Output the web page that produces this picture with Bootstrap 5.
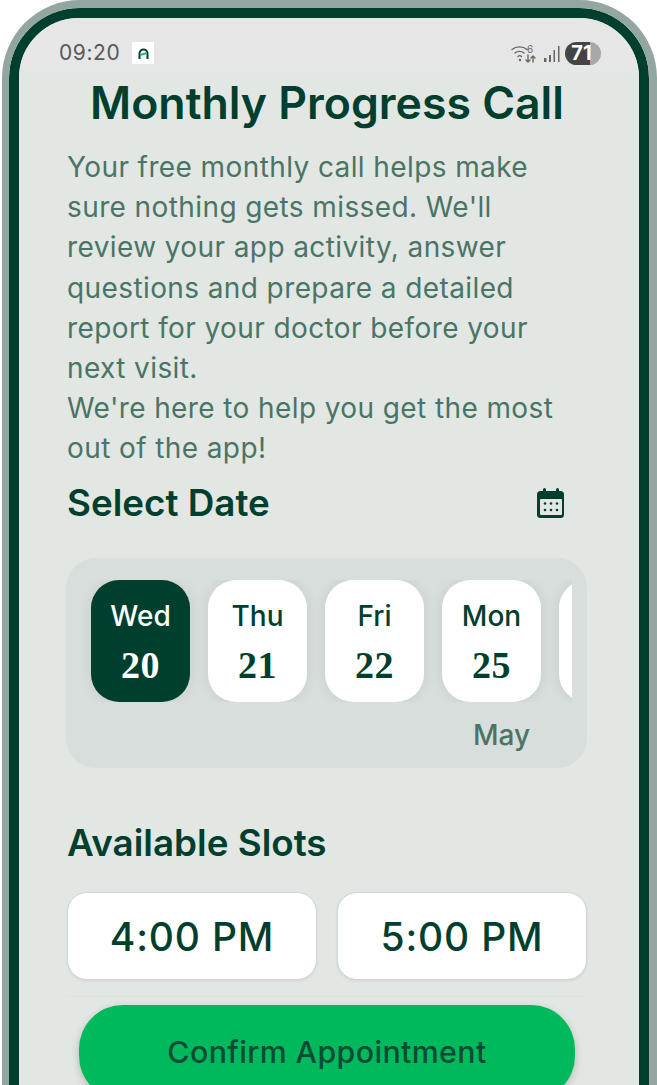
<!DOCTYPE html>
<html lang="en">
<head>
<meta charset="utf-8">
<title>Monthly Progress Call</title>
<link href="https://cdn.jsdelivr.net/npm/bootstrap@5.3.0/dist/css/bootstrap.min.css" rel="stylesheet">
<style>
html,body{height:1085px;overflow:hidden;background:#fff;margin:0}
body{font-family:"Inter","Liberation Sans",sans-serif;color:#003f2e}
.shell{width:655px;height:1200px;margin:0 0 0 2px;border:7px solid #94a6a1;border-top-width:8px;border-right-width:8px;border-radius:78px;overflow:hidden}
.shell-in{height:100%;border:10px solid #003f2e;border-radius:70px;overflow:hidden;background:#e2e7e4}
.status{height:58px;padding:24px 38px 0 40px;background:linear-gradient(#e6e6e6 80%,#e2e7e4);color:#555}
.clock{font-size:21px;line-height:22px;letter-spacing:.6px;color:#595959}
.appmark{width:22px;height:22px;background:#fff}
.batt{width:36px;height:23px;border-radius:12px;background:linear-gradient(90deg,#444 0 69%,#a8a8a8 69%);color:#fff;font-size:20px;font-weight:700;line-height:23px;text-align:center;padding-right:3px}
.signal{margin-left:2px}
.main{padding:0 52px 0 48px}
.title{font-size:44.6px;font-weight:600;line-height:54px;margin:0 0 17px;text-align:center;color:#003f2e;white-space:nowrap}
.intro{font-size:28px;line-height:40.2px;color:#4a7465;letter-spacing:.4px;margin:0;white-space:nowrap}
.sect{font-size:36.8px;font-weight:600;line-height:44px;margin:0;color:#003f2e}
.datehead{margin-top:12px;margin-bottom:33px}
.panel{height:210px;border-radius:30px;background:#d8dedb;padding:22px 15px 0 15px;margin-left:-1px}
.scroller{height:122px;padding-left:10px;column-gap:18px}
.daycard{flex:0 0 99px;height:122px;border-radius:28px;background:#fff;color:#003f2e;box-shadow:0 0 14px rgba(0,0,0,.08);padding-top:19px}
.daycard.on{background:#003f2e;color:#fff}
.dayname{font-size:28px;font-weight:500;line-height:34px}
.daynum{font-family:"Liberation Serif",serif;font-size:38px;font-weight:700;line-height:36px;margin-top:14px;letter-spacing:.5px}
.month{font-size:28px;font-weight:500;line-height:34px;color:#4a7465;padding:16px 42px 0 0;text-align:right}
.slotshead{margin-top:53px;margin-bottom:27px}
.slotbtn{flex:1 1 0;height:88px;border-radius:20px;background:#fff;border:1px solid #cfd6d3;box-shadow:0 1px 3px rgba(0,0,0,.08);font-size:39px;font-weight:500;letter-spacing:.8px;color:#003f2e;padding:3px 0 0}
.slotbtn:hover{background:#fff;color:#003f2e}
.sep{height:1px;background:#dde2df;margin:16px 0 8px}
.confirm{display:block;width:496px;height:95px;margin:0 0 0 12px;border:0;border-radius:44px;background:#00b95c;box-shadow:0 3px 8px rgba(0,0,0,.2);color:#0b4a35;font-size:30.3px;font-weight:500;letter-spacing:.4px;padding:2px 0 0}
</style>
</head>
<body>
<div class="shell"><div class="shell-in">
  <div class="status d-flex align-items-start justify-content-between">
    <div class="d-flex align-items-center gap-2">
      <span class="clock">09:20</span>
      <span class="appmark d-flex align-items-center justify-content-center ms-1">
        <svg width="13" height="13" viewBox="0 0 13 13" fill="none"><path d="M2.5 12V6.5a4 4 0 0 1 8 0V12" stroke="#0c3d30" stroke-width="2"/><path d="M3 8l7-2" stroke="#22b573" stroke-width="2"/></svg>
      </span>
    </div>
    <div class="d-flex align-items-center gap-1">
      <svg width="26" height="22" viewBox="0 0 26 22" fill="none" stroke="#666" stroke-width="1.4" stroke-linecap="round">
        <path d="M1 6.5c4-3.5 11-3.5 15 0M4 10c2.5-2.2 6.5-2.2 9 0M7 13.5c1-1 2.5-1 3.5 0"/>
        <circle cx="9" cy="17" r="1.2" fill="#666" stroke="none"/>
        <path d="M17 12v7m-2-2l2 2 2-2M22 19v-6m-2 2l2-2 2 2"/>
        <text x="16" y="10" font-size="10" fill="#666" stroke="none" font-family="Inter,sans-serif">6</text>
      </svg>
      <svg width="18" height="20" viewBox="0 0 18 20" fill="#666" class="signal"><rect x="1" y="14" width="2.5" height="4"/><rect x="6" y="11" width="2" height="7"/><rect x="10.5" y="6" width="1.5" height="12"/><rect x="15" y="2" width="1.5" height="16"/></svg>
      <span class="batt">71</span>
    </div>
  </div>
  <main class="main">
    <h1 class="title">Monthly Progress Call</h1>
    <p class="intro">Your free monthly call helps make<br>sure nothing gets missed. We'll<br>review your app activity, answer<br>questions and prepare a detailed<br>report for your doctor before your<br>next visit.<br>We're here to help you get the most<br>out of the app!</p>
    <div class="datehead d-flex align-items-center justify-content-between">
      <h2 class="sect">Select Date</h2>
      <svg style="margin-right:22px" width="28" height="32" viewBox="1 0 28 32" aria-label="calendar">
        <path d="M7 2.5a1.5 1.5 0 0 1 3 0V4h10V2.5a1.5 1.5 0 0 1 3 0V4h1.5A3.5 3.5 0 0 1 28 7.5v20a3.5 3.5 0 0 1-3.5 3.5h-20A3.5 3.5 0 0 1 1 27.5v-20A3.5 3.5 0 0 1 4.5 4H7z" fill="#003f2e"/>
        <rect x="4" y="12" width="22" height="16" rx="1" fill="#e2e7e4"/>
        <g fill="#003f2e"><circle cx="9" cy="16.5" r="1.3"/><circle cx="15" cy="16.5" r="1.3"/><circle cx="21" cy="16.5" r="1.3"/><circle cx="9" cy="23" r="1.3"/><circle cx="15" cy="23" r="1.3"/><circle cx="21" cy="23" r="1.3"/></g>
      </svg>
    </div>
    <section class="panel">
      <div class="scroller d-flex overflow-hidden text-center">
        <div class="daycard on"><div class="dayname">Wed</div><div class="daynum">20</div></div>
        <div class="daycard"><div class="dayname">Thu</div><div class="daynum">21</div></div>
        <div class="daycard"><div class="dayname">Fri</div><div class="daynum">22</div></div>
        <div class="daycard"><div class="dayname">Mon</div><div class="daynum">25</div></div>
        <div class="daycard"></div>
      </div>
      <div class="month">May</div>
    </section>
    <h2 class="sect slotshead">Available Slots</h2>
    <div class="d-flex" style="gap:20px">
      <button type="button" class="btn slotbtn">4:00 PM</button>
      <button type="button" class="btn slotbtn">5:00 PM</button>
    </div>
    <div class="sep"></div>
    <button type="button" class="btn confirm">Confirm Appointment</button>
  </main>
</div></div>
<script src="https://cdn.jsdelivr.net/npm/bootstrap@5.3.0/dist/js/bootstrap.bundle.min.js"></script>
</body>
</html>
